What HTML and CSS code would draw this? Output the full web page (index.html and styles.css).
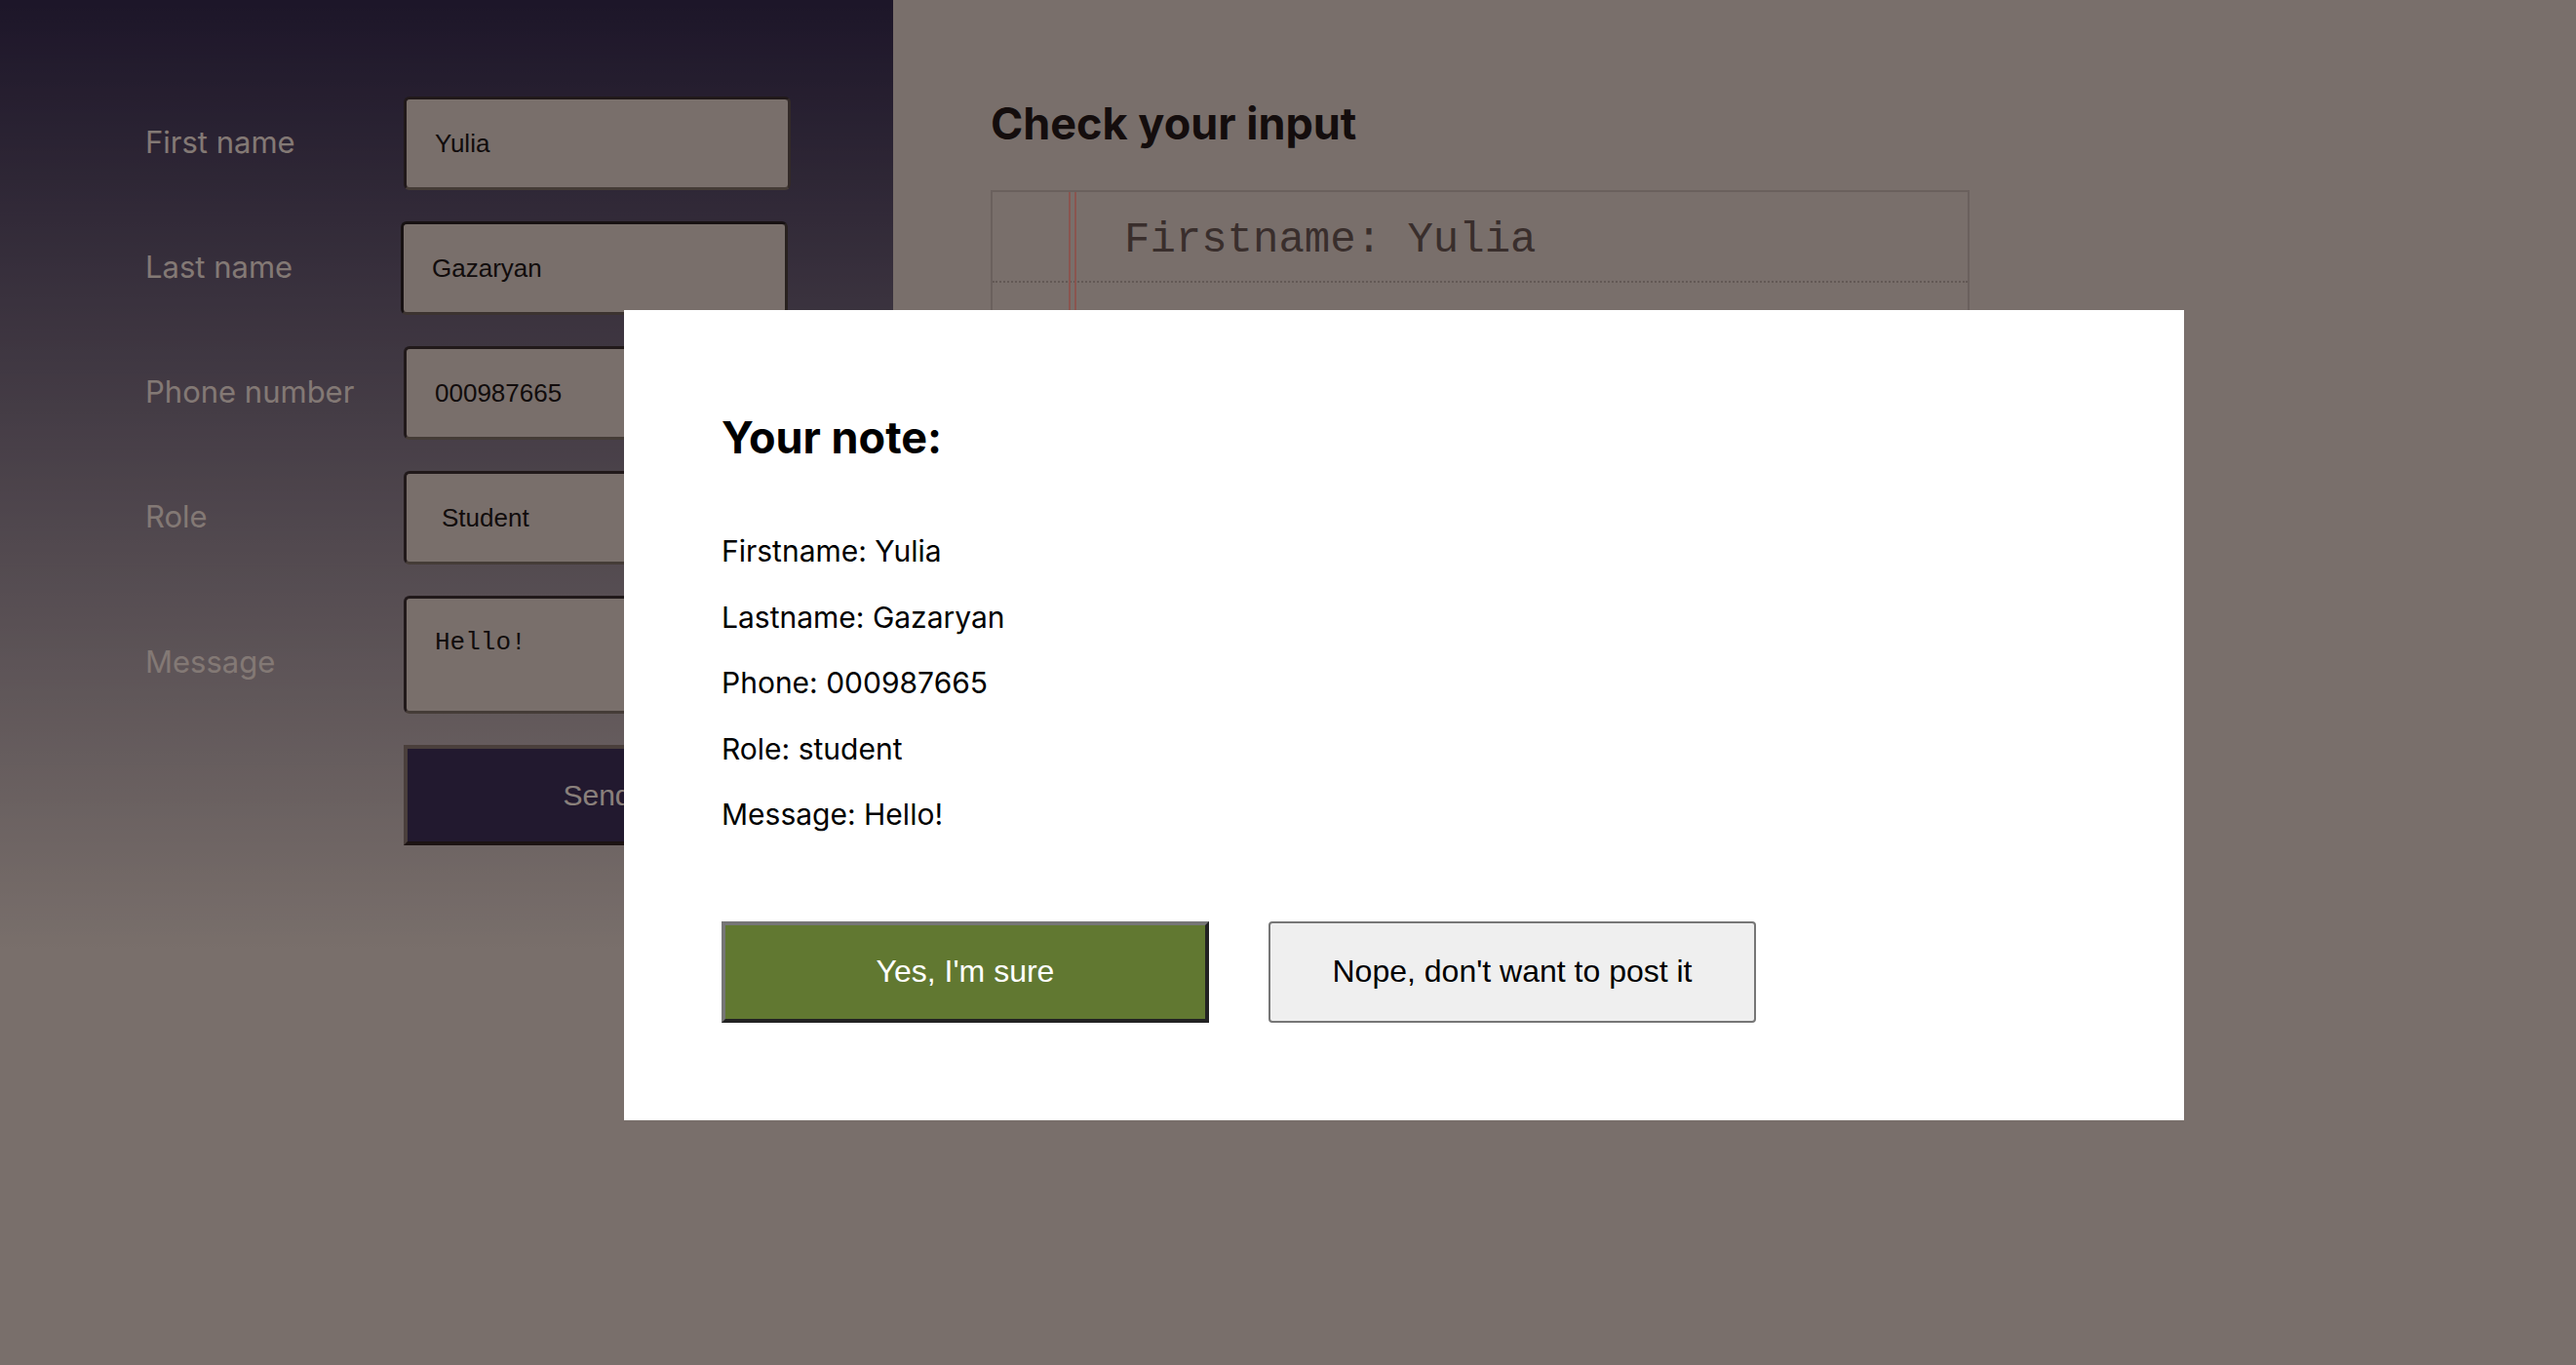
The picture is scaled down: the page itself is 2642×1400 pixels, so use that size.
FILE: index.html
```html
<!DOCTYPE html>
<html lang="en">
<head>
<meta charset="utf-8">
<title>Leave a note</title>
<link rel="stylesheet" href="styles.css">
</head>
<body>
<div class="page">
  <aside class="form-panel">
    <form class="note-form">
      <label class="field-label" for="first">First name</label>
      <input class="field" id="first" type="text" value="Yulia">
      <label class="field-label" for="last">Last name</label>
      <input class="field field-focused" id="last" type="text" value="Gazaryan">
      <label class="field-label" for="phone">Phone number</label>
      <input class="field" id="phone" type="text" value="000987665">
      <label class="field-label" for="role">Role</label>
      <select class="field field-select" id="role"><option>Student</option><option>Teacher</option></select>
      <label class="field-label label-message" for="message">Message</label>
      <textarea class="field field-area" id="message">Hello!</textarea>
      <button class="send" type="button">Send</button>
    </form>
  </aside>
  <main class="preview">
    <h1 class="preview-title">Check your input</h1>
    <div class="notebook">
      <div class="notebook-line">Firstname: Yulia</div>
      <div class="notebook-line">Lastname: Gazaryan</div>
      <div class="notebook-line">Phone: 000987665</div>
      <div class="notebook-line">Role: student</div>
      <div class="notebook-line">Message: Hello!</div>
    </div>
  </main>
</div>
<div class="backdrop"></div>
<div class="dialog" role="dialog" aria-labelledby="dialog-title">
  <h2 class="dialog-title" id="dialog-title">Your note:</h2>
  <div class="dialog-list">
    <p>Firstname: Yulia</p>
    <p>Lastname: Gazaryan</p>
    <p>Phone: 000987665</p>
    <p>Role: student</p>
    <p>Message: Hello!</p>
  </div>
  <div class="dialog-actions">
    <button class="btn btn-confirm" type="button">Yes, I'm sure</button>
    <button class="btn btn-cancel" type="button">Nope, don't want to post it</button>
  </div>
</div>
</body>
</html>
```

FILE: styles.css
```css
html, body {
  margin: 0;
  padding: 0;
}

body {
  background: #dccac3;
  font-family: Inter, "Noto Sans", sans-serif;
  min-height: 100vh;
}

.page {
  display: flex;
  min-height: 100vh;
}

.form-panel {
  width: 916px;
  flex: none;
  box-sizing: border-box;
  padding: 99px 0 0 149px;
  background: linear-gradient(to bottom, #35284b 0, #dccac3 973px);
}

.note-form {
  display: grid;
  grid-template-columns: 265px 397px;
  row-gap: 32px;
  align-items: center;
}

.field-label {
  font-family: Inter, sans-serif;
  font-size: 31px;
  color: #eedcd5;
  margin-bottom: 4px;
}

.label-message {
  margin: 14px 0 0;
}

.field {
  box-sizing: border-box;
  width: 397px;
  height: 96px;
  margin: 0;
  padding: 0 29px;
  background: #dccac3;
  color: #211616;
  font-family: "Liberation Sans", Arial, sans-serif;
  font-size: 26px;
  border: 3px solid;
  border-color: #3c2f31 #5e4e4a #7f6d64 #3c2f31;
  border-radius: 6px;
  outline: none;
}

.field-focused {
  margin-left: -3px;
  border-color: #2a2022 #4a3c3a #6e5e58 #2a2022;
}

.field-select {
  appearance: none;
  -webkit-appearance: none;
  padding-left: 36px;
}

.field-area {
  height: 121px;
  padding: 30px 29px 0;
  font-family: "Liberation Mono", "Courier New", monospace;
  font-size: 26px;
  resize: none;
}

.send {
  grid-column: 2;
  box-sizing: border-box;
  width: 397px;
  height: 103px;
  margin: 0;
  background: #3e2f57;
  color: #fbe9e1;
  font-family: "Liberation Sans", Arial, sans-serif;
  font-size: 30px;
  border: 4px solid;
  border-color: #87746d #332424 #332424 #87746d;
}

.preview {
  flex: 1;
  padding: 99px 0 0 100px;
}

.preview-title {
  margin: 0 0 41px;
  font-family: Inter, sans-serif;
  font-size: 45px;
  font-weight: 700;
  letter-spacing: 0;
  color: #261818;
}

.notebook {
  position: relative;
  width: 1004px;
  box-sizing: border-box;
  border: 2px solid #c1afa9;
}

.notebook::before {
  content: "";
  position: absolute;
  top: 0;
  bottom: 0;
  left: 78px;
  width: 4px;
  border-left: 2px solid #fb9c91;
  border-right: 2px solid #fb9c91;
}

.notebook-line {
  height: 93px;
  box-sizing: border-box;
  padding: 24px 0 0 135px;
  border-bottom: 2px dotted #b2a09c;
  font-family: "Liberation Mono", "Courier New", monospace;
  font-size: 44px;
  color: #695450;
}

.backdrop {
  position: fixed;
  inset: 0;
  background: rgba(0, 0, 0, 0.45);
}

.dialog {
  position: absolute;
  left: 640px;
  top: 318px;
  width: 1600px;
  box-sizing: border-box;
  padding: 108px 100px 100px;
  background: #ffffff;
  color: #000000;
  font-family: Inter, sans-serif;
  font-size: 30px;
}

.dialog-title {
  margin: 0 0 76px;
  font-size: 45px;
  line-height: 45px;
  font-weight: 700;
}

.dialog-list {
  display: flex;
  flex-direction: column;
  gap: 31.5px;
  margin-bottom: 91.5px;
}

.dialog-list p {
  margin: 0;
}

.dialog-actions {
  display: flex;
  gap: 61px;
}

.btn {
  box-sizing: border-box;
  width: 500px;
  height: 104px;
  margin: 0;
  font-family: "Liberation Sans", Arial, sans-serif;
  font-size: 32px;
  cursor: pointer;
}

.btn-confirm {
  background: #617831;
  color: #ffffff;
  border: 4px solid;
  border-color: #767676 #222222 #222222 #767676;
}

.btn-cancel {
  background: #efefef;
  color: #000000;
  border: 2px solid #767676;
  border-radius: 4px;
}
```
